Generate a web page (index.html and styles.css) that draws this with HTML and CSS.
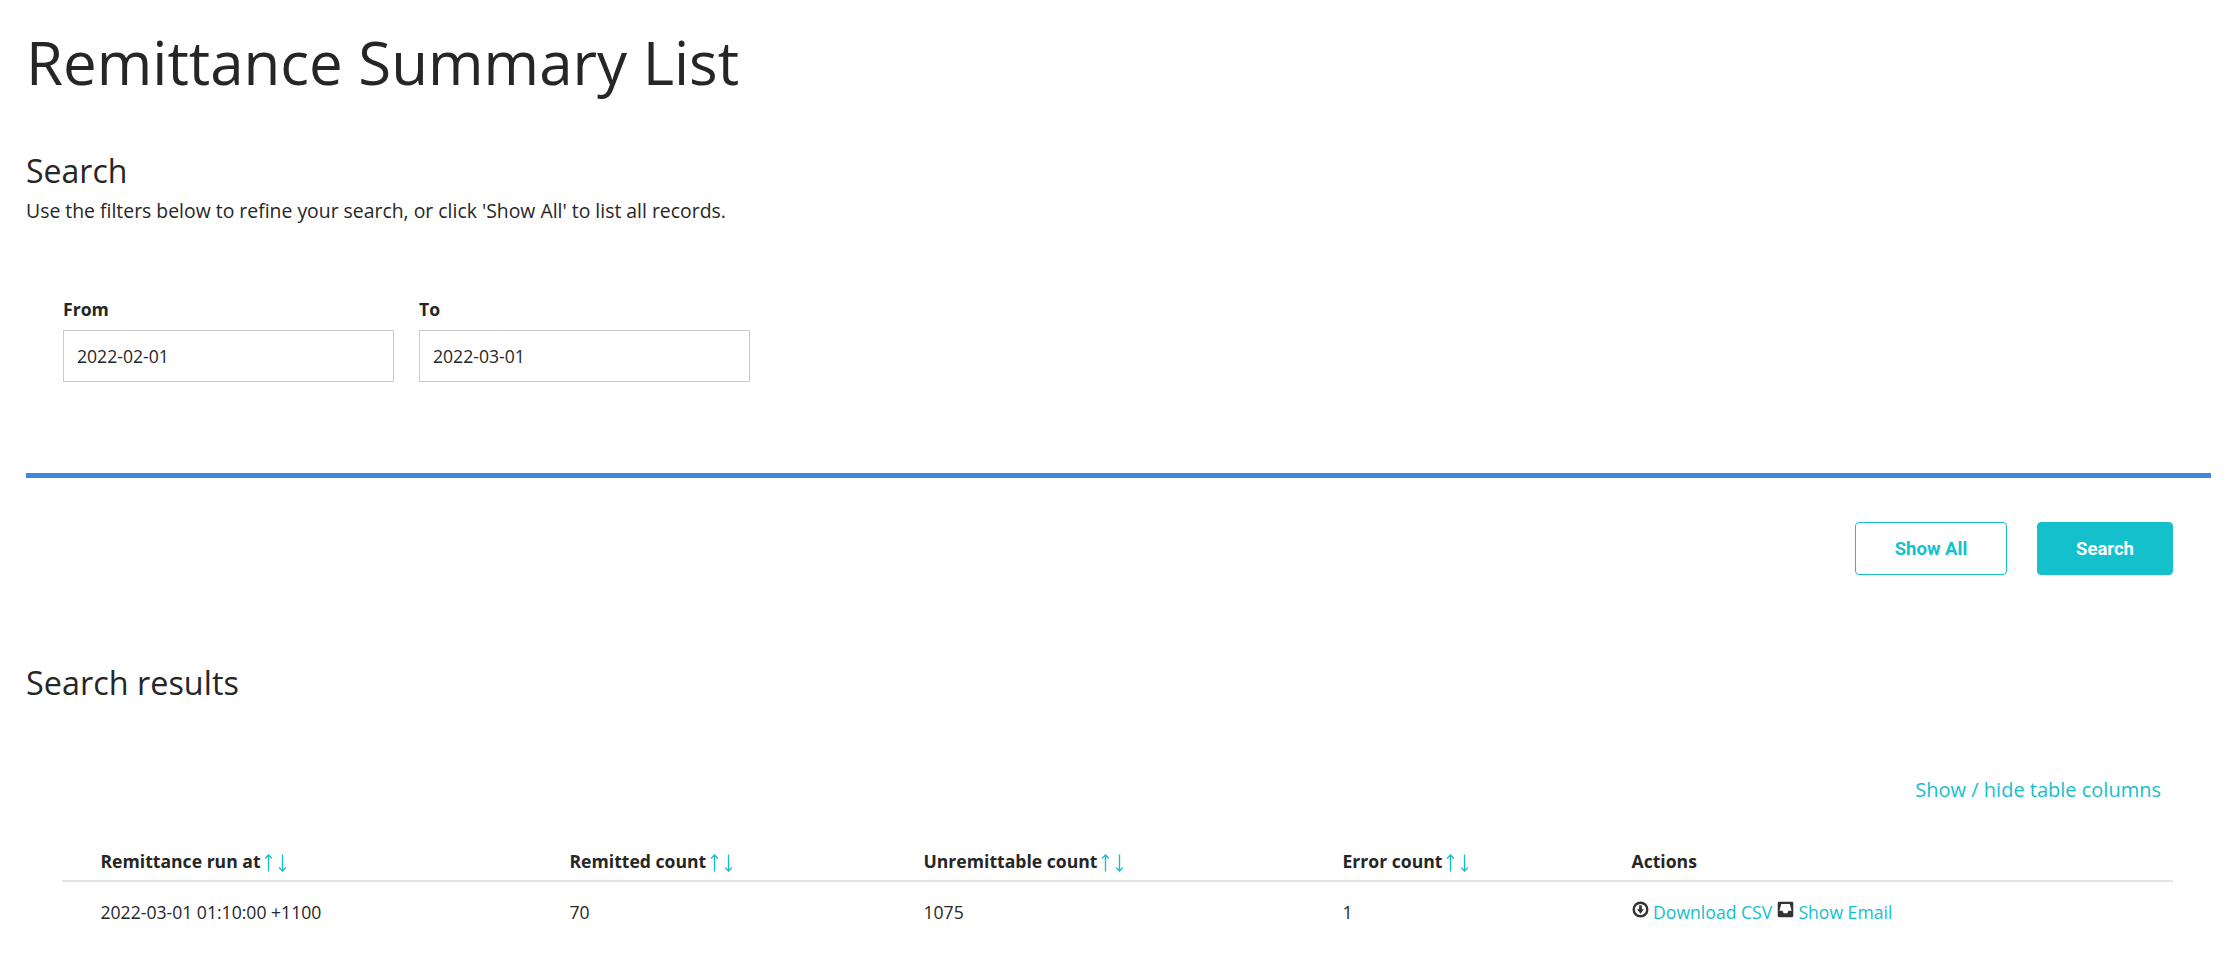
FILE: index.html
```html
<!DOCTYPE html>
<html lang="en">
<head>
<meta charset="utf-8">
<title>Remittance Summary List</title>
<link rel="stylesheet" href="styles.css">
</head>
<body>
<main class="page">
  <h1 class="title">Remittance Summary List</h1>
  <section class="search">
    <h2 class="heading">Search</h2>
    <p class="hint">Use the filters below to refine your search, or click 'Show All' to list all records.</p>
    <div class="filters">
      <div class="field">
        <label class="field-label" for="from">From</label>
        <input class="field-input" id="from" type="text" value="2022-02-01">
      </div>
      <div class="field">
        <label class="field-label" for="to">To</label>
        <input class="field-input" id="to" type="text" value="2022-03-01">
      </div>
    </div>
    <div class="actions">
      <button class="btn btn-outline" type="button">Show All</button>
      <button class="btn btn-solid" type="button">Search</button>
    </div>
  </section>
  <section class="results">
    <h2 class="heading">Search results</h2>
    <div class="toggle-row"><a class="link toggle" href="#">Show / hide table columns</a></div>
    <table class="table">
      <colgroup>
        <col class="c1"><col class="c2"><col class="c3"><col class="c4"><col class="c5">
      </colgroup>
      <thead>
        <tr>
          <th>Remittance run at <span class="sort"><svg viewBox="0 0 8 16" class="arrow"><path d="M4 15.500V1M1 4 4 .8 7 4"/></svg><svg viewBox="0 0 8 16" class="arrow"><path d="M4 .5V15M1 12 4 15.200 7 12"/></svg></span></th>
          <th>Remitted count <span class="sort"><svg viewBox="0 0 8 16" class="arrow"><path d="M4 15.500V1M1 4 4 .8 7 4"/></svg><svg viewBox="0 0 8 16" class="arrow"><path d="M4 .5V15M1 12 4 15.200 7 12"/></svg></span></th>
          <th>Unremittable count <span class="sort"><svg viewBox="0 0 8 16" class="arrow"><path d="M4 15.500V1M1 4 4 .8 7 4"/></svg><svg viewBox="0 0 8 16" class="arrow"><path d="M4 .5V15M1 12 4 15.200 7 12"/></svg></span></th>
          <th>Error count <span class="sort"><svg viewBox="0 0 8 16" class="arrow"><path d="M4 15.500V1M1 4 4 .8 7 4"/></svg><svg viewBox="0 0 8 16" class="arrow"><path d="M4 .5V15M1 12 4 15.200 7 12"/></svg></span></th>
          <th>Actions</th>
        </tr>
      </thead>
      <tbody>
        <tr>
          <td>2022-03-01 01:10:00 +1100</td>
          <td>70</td>
          <td>1075</td>
          <td>1</td>
          <td>
            <svg class="icon" viewBox="0 0 14 14"><circle cx="7" cy="7" r="5.6" class="icon-ring"/><path class="icon-fill" d="M5.900 3.400h2.200v3.400h1.700L7 10.400 4.200 6.800h1.700z"/></svg>
            <a class="link" href="#">Download CSV</a>
            <svg class="icon" viewBox="0 0 14 14"><path class="icon-fill" fill-rule="evenodd" d="M1.800.6h10.400c.7 0 1.200.5 1.200 1.200v10.400c0 .7-.5 1.200-1.200 1.200H1.800c-.7 0-1.200-.5-1.200-1.200V1.800C.6 1.100 1.100.6 1.800.6zM3.500 2.400 2 8h2.500l1 2h3l1-2H12l-1.500-5.600z"/></svg>
            <a class="link" href="#">Show Email</a>
          </td>
        </tr>
      </tbody>
    </table>
  </section>
</main>
</body>
</html>
```
FILE: styles.css
```css
* { box-sizing: border-box; }
html, body { margin: 0; background: #fff; }
body {
  font-family: "Open Sans", "Noto Sans", sans-serif;
  color: #262626;
  font-size: 17.6px;
}
.page { padding: 0 16px 0 26px; }
.title {
  margin: 0;
  padding-top: 20px;
  font-size: 60px;
  line-height: 84px;
  font-weight: 400;
}
.search { margin-top: 46px; }
.heading {
  margin: 0;
  font-size: 32px;
  line-height: 42px;
  font-weight: 400;
}
.hint { margin: 6px 0 0; font-size: 19.4px; line-height: 26px; }
.filters {
  display: flex;
  gap: 25px;
  padding: 73px 0 0 37px;
  height: 254px;
  border-bottom: 5px solid #4285e0;
}
.field { width: 331px; }
.field-label {
  display: block;
  font-size: 17.6px;
  line-height: 24px;
  font-weight: 700;
  margin-bottom: 9px;
}
.field-input {
  display: block;
  width: 100%;
  height: 52px;
  padding: 0 13px;
  border: 1px solid #ccc;
  border-radius: 0;
  font: 400 17.6px "Open Sans", sans-serif;
  color: #262626;
}
.actions {
  display: flex;
  justify-content: flex-end;
  gap: 30px;
  padding: 44px 38px 0 0;
}
.btn {
  height: 53px;
  border-radius: 4px;
  font: 700 18.5px Roboto, "Open Sans", sans-serif;
  cursor: pointer;
}
.btn-outline { width: 152px; background: #fff; border: 1px solid #14c0cc; color: #14c0cc; }
.btn-solid { width: 136px; background: #14c0cc; border: 1px solid #14c0cc; color: #fff; }
.results { margin-top: 86px; }
.results .heading { font-size: 32.4px; }
.link { color: #14c0cc; text-decoration: none; }
.toggle-row { display: flex; justify-content: flex-end; padding: 73px 50px 0 0; }
.toggle { font-size: 20px; line-height: 28px; }
.table {
  width: 2111px;
  margin: 37px 0 0 36px;
  border-collapse: collapse;
  table-layout: fixed;
}
.c1 { width: 469px; }
.c2 { width: 354px; }
.c3 { width: 419px; }
.c4 { width: 289px; }
.c5 { width: 580px; }
th, td { text-align: left; padding: 0 0 0 38.5px; font-size: 17.6px; }
th {
  height: 40px;
  font-weight: 700;
  line-height: 22px;
  border-bottom: 2px solid #e4e4e4;
  white-space: nowrap;
}
td { height: 60px; line-height: 22px; }
.sort { display: inline-flex; gap: 5px; margin-left: -1px; vertical-align: -4px; }
.arrow { width: 9px; height: 18px; fill: none; stroke: #14c0cc; stroke-width: 1.2; }
.icon { width: 17px; height: 17px; vertical-align: 1px; }
.icon-ring { fill: none; stroke: #333; stroke-width: 2; }
.icon-fill { fill: #333; }
```
